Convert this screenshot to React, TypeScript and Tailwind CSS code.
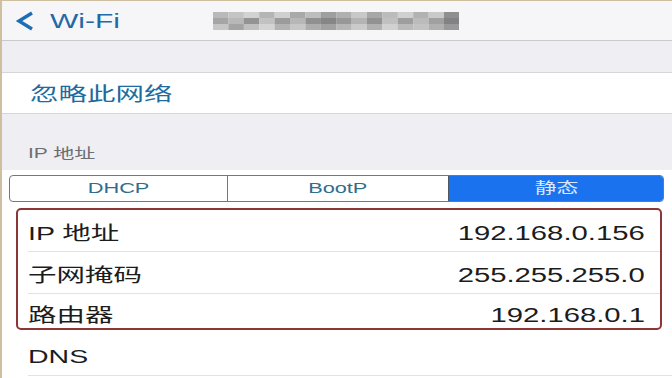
import React from "react";

const font = "font-['Liberation_Sans','Noto_Sans_CJK_SC',sans-serif]";

// mosaic shades for the blurred network name
const mosaic = [
  ["#b9b9b9", "#c4c4c4", "#d2d2d2", "#b5b5b5", "#cfcfcf", "#a9a9a9", "#bdbdbd", "#9f9f9f", "#b0b0b0", "#c8c8c8", "#a7a7a7", "#bcbcbc", "#d0d0d0", "#b2b2b2", "#c9c9c9", "#8f8f8f"],
  ["#a5a5a5", "#b8b8b8", "#939393", "#c2c2c2", "#9b9b9b", "#b7b7b7", "#909090", "#868686", "#989898", "#b4b4b4", "#929292", "#c0c0c0", "#9e9e9e", "#bbbbbb", "#a0a0a0", "#828282"],
  ["#c6c6c6", "#a4a4a4", "#bfbfbf", "#d4d4d4", "#b3b3b3", "#c7c7c7", "#adadad", "#a1a1a1", "#b6b6b6", "#cbcbcb", "#b1b1b1", "#d1d1d1", "#bababa", "#c3c3c3", "#b0b0b0", "#999999"],
];

const Mosaic = () => (
  <svg width="246" height="18" viewBox="0 0 246 18" className="block">
    {mosaic.map((row, r) =>
      row.map((c, i) => (
        <rect key={`${r}-${i}`} x={i * 15.4} y={r * 6} width="15.5" height="6.1" fill={c} />
      ))
    )}
  </svg>
);

const Stretch = ({ children, right }: { children: React.ReactNode; right?: boolean }) => (
  <span className={`inline-block whitespace-nowrap scale-x-150 ${right ? "origin-right" : "origin-left"}`}>
    {children}
  </span>
);

interface RowProps {
  label: string;
  value?: string;
  h: string;
  last?: boolean;
}

const Row = ({ label, value, h, last }: RowProps) => (
  <div className={`ml-[10px] ${last ? "" : "border-b border-[#e3e3e6]"}`}>
    <div className={`flex items-center justify-between pr-[15px] ${h}`}>
      <span className="text-[19px] text-[#1c1c1c]">
        <Stretch>{label}</Stretch>
      </span>
      {value && (
        <span className="text-[19.5px] text-[#1c1c1c]">
          <Stretch right>{value}</Stretch>
        </span>
      )}
    </div>
  </div>
);

export default function App() {
  return (
    <div className={`w-[672px] h-[378px] overflow-hidden bg-white border-l-[2px] border-t-[1px] border-[#cdbf9f] ${font}`}>
      {/* Nav bar */}
      <div className="h-[40px] bg-[#f6f6f8] border-b border-[#c9c9ce] flex items-center">
        <svg width="20" height="22" viewBox="0 0 20 22" className="ml-[13px]">
          <path d="M17 3 L4 11 L17 19" fill="none" stroke="#1f6db3" strokeWidth="3.4" strokeLinejoin="miter" />
        </svg>
        <span className="ml-[15px] text-[20px] text-[#1f6aa5] leading-none">
          <Stretch>Wi-Fi</Stretch>
        </span>
        <div className="ml-[116px]">
          <Mosaic />
        </div>
      </div>

      {/* gap section */}
      <div className="h-[32px] bg-[#efeff3] border-b border-[#d6d6da]" />

      {/* forget network */}
      <div className="h-[41px] flex items-center pl-[28px] pt-[5px] border-b border-[#d6d6da]">
        <span className="text-[19px] text-[#1d6c9e]">
          <Stretch>忽略此网络</Stretch>
        </span>
      </div>

      {/* header */}
      <div className="h-[56px] bg-[#efeff3] flex items-end pl-[26px] pb-[10px]">
        <span className="text-[14px] text-[#6d6d72] leading-none">
          <Stretch>IP 地址</Stretch>
        </span>
      </div>

      {/* segmented control */}
      <div className="pt-[5px] pl-[7px] pr-[8px]">
        <div className="grid grid-cols-[218px_220px_1fr] h-[27px] rounded-[4px] border border-[#5f7f8f] overflow-hidden">
          <div className="flex items-center justify-center border-r border-[#5f7f8f] text-[14.5px] text-[#2f6e8d]">
            <span className="inline-block scale-x-150">DHCP</span>
          </div>
          <div className="flex items-center justify-center text-[14.5px] text-[#2f6e8d]">
            <span className="inline-block scale-x-150">BootP</span>
          </div>
          <div className="flex items-center justify-center bg-[#1b72ee] border-l border-[#4f5963] text-[14.5px] text-[#dbe9ff]">
            <span className="inline-block scale-x-150">静态</span>
          </div>
        </div>
      </div>

      {/* address box */}
      <div className="mt-[6px] ml-[14px] mr-[10px] border-[2px] border-[#8e3535] rounded-[5px] overflow-hidden">
        <Row label="IP 地址" value="192.168.0.156" h="h-[41px] pt-[7px]" />
        <Row label="子网掩码" value="255.255.255.0" h="h-[41px] pt-[7px]" />
        <Row label="路由器" value="192.168.0.1" h="h-[34px] pt-[10px]" last />
      </div>

      {/* DNS */}
      <div className="ml-[26px] border-b border-[#e3e3e6]">
        <div className="h-[45px] flex items-center pt-[10px]">
          <span className="text-[19px] text-[#1c1c1c]">
            <Stretch>DNS</Stretch>
          </span>
        </div>
      </div>
    </div>
  );
}
